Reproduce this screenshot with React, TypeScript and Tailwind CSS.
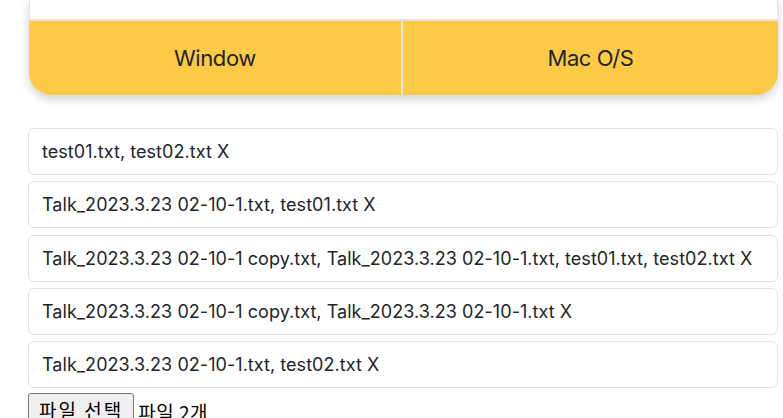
import React from "react";

const items = [
  "test01.txt, test02.txt X",
  "Talk_2023.3.23 02-10-1.txt, test01.txt X",
  "Talk_2023.3.23 02-10-1 copy.txt, Talk_2023.3.23 02-10-1.txt, test01.txt, test02.txt X",
  "Talk_2023.3.23 02-10-1 copy.txt, Talk_2023.3.23 02-10-1.txt X",
  "Talk_2023.3.23 02-10-1.txt, test02.txt X",
];

export default function App() {
  return (
    <div
      className="w-[783px] h-[418px] overflow-hidden bg-white text-[#212529]"
      style={{ fontFamily: "Inter, 'Noto Sans CJK KR', sans-serif" }}
    >
      <div className="ml-[29px] w-[749px] rounded-b-[22px] shadow-[0_4px_10px_rgba(0,0,0,0.18)] overflow-hidden">
        <div className="h-[19px] bg-white border-l border-r border-[#e3e3e3]" />
        <div className="h-[2px] bg-[#e2e2e2]" />
        <div className="flex h-[74px] bg-[#fec945]">
          <div className="w-[372px] flex items-center justify-center text-[22px] tracking-[-0.4px]">Window</div>
          <div className="w-[2px] bg-[#e6e6e6]" />
          <div className="flex-1 flex items-center justify-center text-[22px] tracking-[-0.4px]">Mac O/S</div>
        </div>
      </div>
      <div className="mt-[33px] ml-[28px] w-[750px] flex flex-col gap-[6.25px]">
        {items.map((t, i) => (
          <div
            key={i}
            className="h-[47px] border border-[#dee2e6] rounded-[6px] pl-[13px] flex items-center text-[18px] tracking-[0.05px] whitespace-nowrap"
          >
            {t}
          </div>
        ))}
      </div>
      <div className="ml-[28px] mt-[5px] flex items-center text-black" style={{ fontFamily: "'Noto Sans CJK KR', sans-serif" }}>
        <button className="h-[30px] pl-[10px] pr-[10px] bg-[#efefef] border border-[#767676] rounded-[3px] text-[19px] leading-none tracking-[2px] pt-[2px]">
          파일 선택
        </button>
        <span className="ml-[4px] text-[19px] leading-none pt-[6px] tracking-[0.5px]">파일 2개</span>
      </div>
    </div>
  );
}
